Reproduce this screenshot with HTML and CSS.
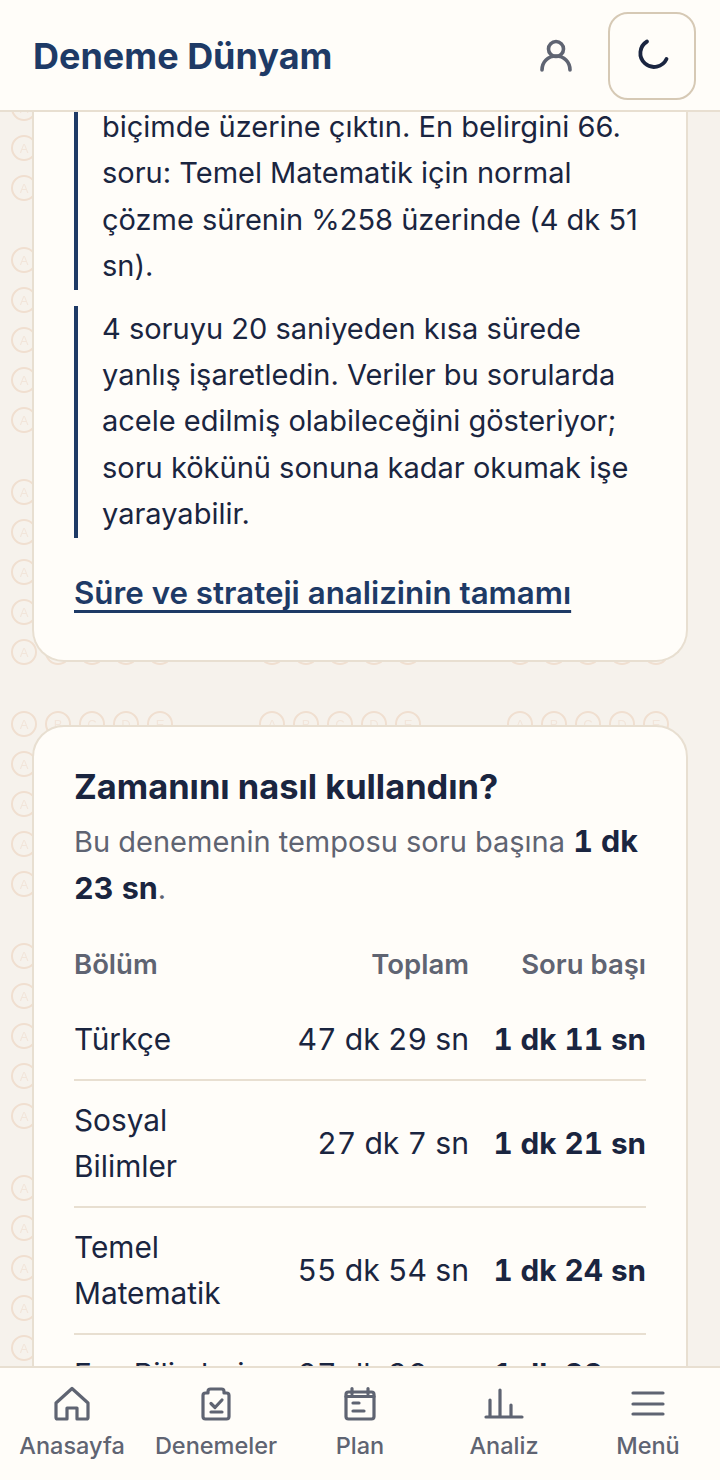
FILE: index.html
```html
<!DOCTYPE html>
<html lang="tr">
<head>
    <meta charset="UTF-8">
    <meta name="viewport" content="width=device-width, initial-scale=1.0">
    <title>Deneme Dünyam</title>
    <link rel="stylesheet" href="styles.css">
</head>
<body>
    <header class="topbar">
        <div class="brand">Deneme Dünyam</div>
        <svg class="user-icon" viewBox="0 0 40 40" fill="none" stroke="#5f6472" stroke-width="3.6" stroke-linecap="round">
            <circle cx="20" cy="13" r="7.5"/>
            <path d="M6 34c0-8 6-14 14-14s14 6 14 14"/>
        </svg>
        <button class="theme-btn" type="button" aria-label="Tema">
            <svg viewBox="0 0 40 40" fill="none" stroke="#1a2540" stroke-width="3.8" stroke-linecap="round">
                <path d="M15 5.500A13.700 13.700 0 1 0 34.500 23"/>
            </svg>
        </button>
    </header>

    <main class="content">
        <section class="card card-first">
            <p class="note note-clipped">biçimde üzerine çıktın. En belirgini 66. soru: Temel Matematik için normal çözme sürenin %258 üzerinde (4 dk 51 sn).</p>
            <p class="note">4 soruyu 20 saniyeden kısa sürede yanlış işaretledin. Veriler bu sorularda acele edilmiş olabileceğini gösteriyor; soru kökünü sonuna kadar okumak işe yarayabilir.</p>
            <a class="more-link" href="#">Süre ve strateji analizinin tamamı</a>
        </section>

        <section class="card">
            <h2>Zamanını nasıl kullandın?</h2>
            <p class="lead">Bu denemenin temposu soru başına <strong>1 dk 23 sn</strong>.</p>
            <table class="time-table">
                <thead>
                    <tr>
                        <th class="col-name">Bölüm</th>
                        <th class="col-total">Toplam</th>
                        <th class="col-each">Soru başı</th>
                    </tr>
                </thead>
                <tbody>
                    <tr>
                        <td>Türkçe</td>
                        <td class="num">47 dk 29 sn</td>
                        <td class="num bold">1 dk 11 sn</td>
                    </tr>
                    <tr>
                        <td>Sosyal Bilimler</td>
                        <td class="num">27 dk 7 sn</td>
                        <td class="num bold">1 dk 21 sn</td>
                    </tr>
                    <tr>
                        <td>Temel Matematik</td>
                        <td class="num">55 dk 54 sn</td>
                        <td class="num bold">1 dk 24 sn</td>
                    </tr>
                    <tr>
                        <td>Fen Bilimleri</td>
                        <td class="num">27 dk 36 sn</td>
                        <td class="num bold">1 dk 22 sn</td>
                    </tr>
                </tbody>
            </table>
        </section>
    </main>

    <nav class="tabbar">
        <a class="tab" href="#">
            <svg viewBox="0 0 40 40"><path d="M20 3.500 36 18V32.500a1.500 1.500 0 0 1-1.500 1.500H25V23H15V34H5.500a1.500 1.500 0 0 1-1.500-1.500V18Z"/></svg>
            <span>Anasayfa</span>
        </a>
        <a class="tab" href="#">
            <svg viewBox="0 0 40 40">
                <path d="M12 8H9.500A2.500 2.500 0 0 0 7 10.500V31.500A2.500 2.500 0 0 0 9.500 34H30.500A2.500 2.500 0 0 0 33 31.500V10.500A2.500 2.500 0 0 0 30.500 8H28V6.500A2.500 2.500 0 0 0 25.500 4H14.500A2.500 2.500 0 0 0 12 6.500Z"/>
                <path d="M15 18.500l4 4 7-7.500M15 27H26"/>
            </svg>
            <span>Denemeler</span>
        </a>
        <a class="tab" href="#">
            <svg viewBox="0 0 40 40">
                <rect x="6" y="7" width="28" height="27" rx="2.500"/>
                <path d="M6 11.500H34M12 3.500V9M28 3.500V9M13 18H19M13 26H24"/>
            </svg>
            <span>Plan</span>
        </a>
        <a class="tab" href="#">
            <svg viewBox="0 0 40 40"><path d="M2 32H38M6 32V15M16 32V5M27 32V20"/></svg>
            <span>Analiz</span>
        </a>
        <a class="tab" href="#">
            <svg viewBox="0 0 40 40"><path d="M5 8H35M5 19H35M5 29H35"/></svg>
            <span>Menü</span>
        </a>
    </nav>
</body>
</html>
```

FILE: styles.css
```css
* {
    box-sizing: border-box;
}

html, body {
    margin: 0;
    padding: 0;
    height: 100%;
}

body {
    display: flex;
    flex-direction: column;
    height: 100vh;
    overflow: hidden;
    font-family: Inter, "Liberation Sans", sans-serif;
    color: #1a2540;
    background-color: #f6f2ec;
    background-image: url("data:image/svg+xml,%3Csvg xmlns='http://www.w3.org/2000/svg' xmlns:xlink='http://www.w3.org/1999/xlink' width='248' height='232'%3E%3Cdefs%3E%3Cg id='r' font-family='Liberation Sans' font-size='13' text-anchor='middle'%3E%3Cg fill='none' stroke='%23f0dfd0' stroke-width='2'%3E%3Ccircle cx='24' cy='28' r='12'/%3E%3Ccircle cx='58' cy='28' r='12'/%3E%3Ccircle cx='92' cy='28' r='12'/%3E%3Ccircle cx='126' cy='28' r='12'/%3E%3Ccircle cx='160' cy='28' r='12'/%3E%3C/g%3E%3Cg fill='%23f2e5da'%3E%3Ctext x='24' y='33'%3EA%3C/text%3E%3Ctext x='58' y='33'%3EB%3C/text%3E%3Ctext x='92' y='33'%3EC%3C/text%3E%3Ctext x='126' y='33'%3ED%3C/text%3E%3Ctext x='160' y='33'%3EE%3C/text%3E%3C/g%3E%3C/g%3E%3C/defs%3E%3Cuse xlink:href='%23r'/%3E%3Cuse xlink:href='%23r' y='40'/%3E%3Cuse xlink:href='%23r' y='80'/%3E%3Cuse xlink:href='%23r' y='120'/%3E%3Cuse xlink:href='%23r' y='160'/%3E%3C/svg%3E");
    background-repeat: repeat;
}

/* top bar */
.topbar {
    flex: none;
    display: flex;
    align-items: center;
    height: 112px;
    padding: 2px 24px 0 33px;
    background-color: #fffdf9;
    border-bottom: 2px solid #e8dfd1;
}

.brand {
    flex: 1;
    font-size: 36px;
    font-weight: 700;
    color: #1e3a66;
}

.user-icon {
    width: 40px;
    height: 40px;
    margin-right: 32px;
}

.theme-btn {
    display: flex;
    align-items: center;
    justify-content: center;
    width: 88px;
    height: 88px;
    padding: 0;
    background: none;
    border: 2px solid #d6c9b5;
    border-radius: 20px;
}

.theme-btn svg {
    width: 40px;
    height: 40px;
}

/* scrolled content */
.content {
    flex: 1;
    min-height: 0;
    overflow: hidden;
    padding: 0 32px;
}

.card {
    padding: 40px;
    background-color: #fffdf9;
    border: 2px solid #e8dfd1;
    border-radius: 32px;
}

.card-first {
    padding-top: 0;
    padding-bottom: 44px;
    border-top: none;
    border-top-left-radius: 0;
    border-top-right-radius: 0;
    margin-bottom: 63px;
}

.note {
    margin: 0 0 16px;
    padding-left: 24px;
    border-left: 4px solid #1e3a66;
    font-size: 29px;
    line-height: 46.4px;
}

.note-clipped {
    margin-top: -8px;
}

.more-link {
    display: inline-block;
    margin-top: 16px;
    font-size: 31.3px;
    font-weight: 600;
    line-height: 46px;
    color: #1e3a66;
    text-decoration: underline;
    text-decoration-thickness: 3px;
    text-decoration-skip-ink: none;
    text-underline-offset: 6px;
}

h2 {
    margin: 0 0 11px;
    font-size: 34.4px;
    font-weight: 700;
    line-height: 40px;
}

.lead {
    margin: 0 0 16px;
    font-size: 29px;
    line-height: 46.4px;
    color: #5f6472;
}

.lead strong {
    color: #1a2540;
    font-size: 30.5px;
    font-weight: 700;
    font-variant-numeric: tabular-nums;
}

.time-table {
    width: 100%;
    table-layout: fixed;
    border-collapse: collapse;
    font-size: 29.8px;
    line-height: 46.4px;
}

.time-table th {
    height: 72px;
    padding: 0;
    font-size: 27.5px;
    font-weight: 600;
    color: #5f6472;
    text-align: right;
}

.time-table th.col-name {
    width: 190px;
    text-align: left;
}

.time-table th.col-total {
    width: 205px;
}

.time-table td {
    padding: 16px 0;
    border-bottom: 2px solid #e8dfd1;
}

.time-table .num {
    font-size: 30.2px;
    text-align: right;
    white-space: nowrap;
    font-variant-numeric: tabular-nums;
}

.time-table .bold {
    font-size: 29.7px;
    font-weight: 700;
}

/* bottom nav */
.tabbar {
    flex: none;
    display: grid;
    grid-template-columns: repeat(5, 1fr);
    height: 114px;
    padding-top: 17px;
    background-color: #fffdf9;
    border-top: 2px solid #e8dfd1;
}

.tab {
    display: flex;
    flex-direction: column;
    align-items: center;
    gap: 7px;
    font-size: 23.5px;
    font-weight: 500;
    line-height: 28px;
    color: #5f6472;
    text-decoration: none;
}

.tab svg {
    width: 40px;
    height: 40px;
    fill: none;
    stroke: #5f6472;
    stroke-width: 3.200;
    stroke-linecap: round;
    stroke-linejoin: round;
}
```
